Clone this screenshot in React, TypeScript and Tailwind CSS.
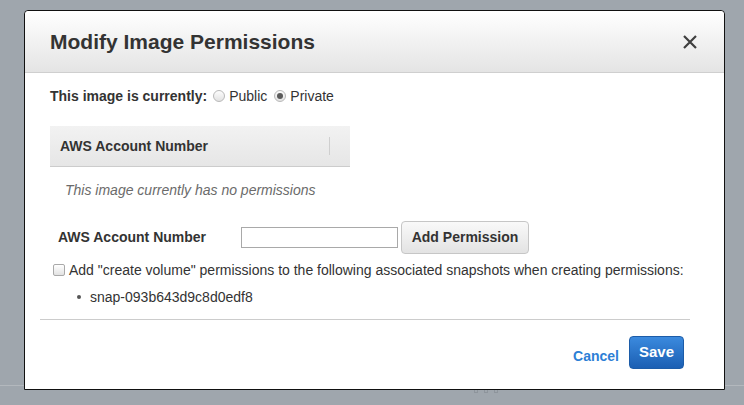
import React from "react";

const Radio = ({ checked, label }: { checked?: boolean; label: string }) => (
  <label className="flex items-center gap-[4px]">
    <span className="flex h-[12px] w-[12px] items-center justify-center rounded-full border border-[#b9b9b9] bg-gradient-to-b from-[#fdfdfd] to-[#e2e2e2]">
      {checked && <span className="h-[6px] w-[6px] rounded-full bg-[#5b5b5b]" />}
    </span>
    <span className="font-normal">{label}</span>
  </label>
);

const CloseIcon = () => (
  <svg width="14" height="14" viewBox="0 0 14 14">
    <path d="M1 1 L13 13 M13 1 L1 13" stroke="#3f3f3f" strokeWidth="2.2" />
  </svg>
);

const App = () => {
  return (
    <div
      className="relative h-[405px] w-[744px] overflow-hidden bg-[#9fa6ad] text-[14px] text-[#333]"
      style={{ fontFamily: '"Liberation Sans", Arial, sans-serif' }}
    >
      {/* page behind the overlay */}
      <div className="absolute left-0 top-[385px] h-px w-full bg-[#b3b8bd]" />
      <div className="absolute left-[474px] top-[389px] flex gap-[6px]">
        <span className="h-[4px] w-[4px] border border-[#8e959c]" />
        <span className="h-[4px] w-[4px] border border-[#8e959c]" />
        <span className="h-[4px] w-[4px] border border-[#8e959c]" />
      </div>

      <div className="relative ml-[24px] mt-[10px] flex h-[380px] w-[701px] flex-col rounded-t-[4px] border border-[#111] bg-white">
        <div className="flex h-[62px] items-center justify-between rounded-t-[4px] border-b border-[#cfcfcf] bg-gradient-to-b from-white to-[#e4e4e4] pl-[25px] pr-[27px]">
          <h2 className="text-[21px] font-bold text-[#333]">Modify Image Permissions</h2>
          <CloseIcon />
        </div>

        <div className="flex flex-1 flex-col pl-[25px]">
          <div className="mt-[13px] flex h-[20px] items-center gap-[6px] font-bold">
            <span>This image is currently:</span>
            <div className="flex items-center gap-[7px]">
              <Radio label="Public" />
              <Radio checked label="Private" />
            </div>
          </div>

          <div className="mt-[20px] flex h-[41px] w-[300px] items-center justify-between border-b border-[#cccccc] bg-gradient-to-b from-[#f2f2f2] to-[#e6e6e6] pl-[10px] pr-[20px]">
            <span className="font-bold">AWS Account Number</span>
            <span className="h-[18px] w-px bg-[#cfcfcf]" />
          </div>

          <p className="mt-[13px] pl-[15px] italic text-[#6b6b6b]">This image currently has no permissions</p>

          <div className="mt-[20px] flex h-[33px] items-center">
            <span className="w-[191px] pl-[8px] font-bold">AWS Account Number</span>
            <input className="h-[21px] w-[157px] border border-[#a9a9a9] bg-white outline-none" />
            <button className="ml-[3px] h-[33px] w-[128px] rounded-[4px] border border-[#c6c6c6] bg-gradient-to-b from-[#f9f9f9] to-[#e3e3e3] font-bold text-[#333]">
              Add Permission
            </button>
          </div>

          <label className="mt-[7px] flex h-[18px] items-center gap-[4px] pl-[3px]">
            <span className="h-[12px] w-[12px] rounded-[2px] border border-[#a9a9a9] bg-gradient-to-b from-white to-[#e2e2e2]" />
            <span>Add "create volume" permissions to the following associated snapshots when creating permissions:</span>
          </label>

          <ul className="mt-[9px] flex h-[18px] items-center pl-[27px]">
            <li className="flex items-center gap-[9px]">
              <span className="h-[4px] w-[4px] rounded-full bg-[#555]" />
              <span>snap-093b643d9c8d0edf8</span>
            </li>
          </ul>

          <div className="ml-[-10px] mr-[34px] mt-[13px] h-px bg-[#cccccc]" />

          <div className="mt-[16px] flex items-center justify-end gap-[10px] pr-[40px]">
            <button className="mt-[7px] font-bold text-[#2d7fd6]">Cancel</button>
            <button className="h-[33px] w-[55px] rounded-[4px] border border-[#1c5ca8] bg-gradient-to-b from-[#3b8ade] to-[#1b5fb3] text-[15px] font-bold text-white">
              Save
            </button>
          </div>
        </div>
      </div>
    </div>
  );
};

export default App;
